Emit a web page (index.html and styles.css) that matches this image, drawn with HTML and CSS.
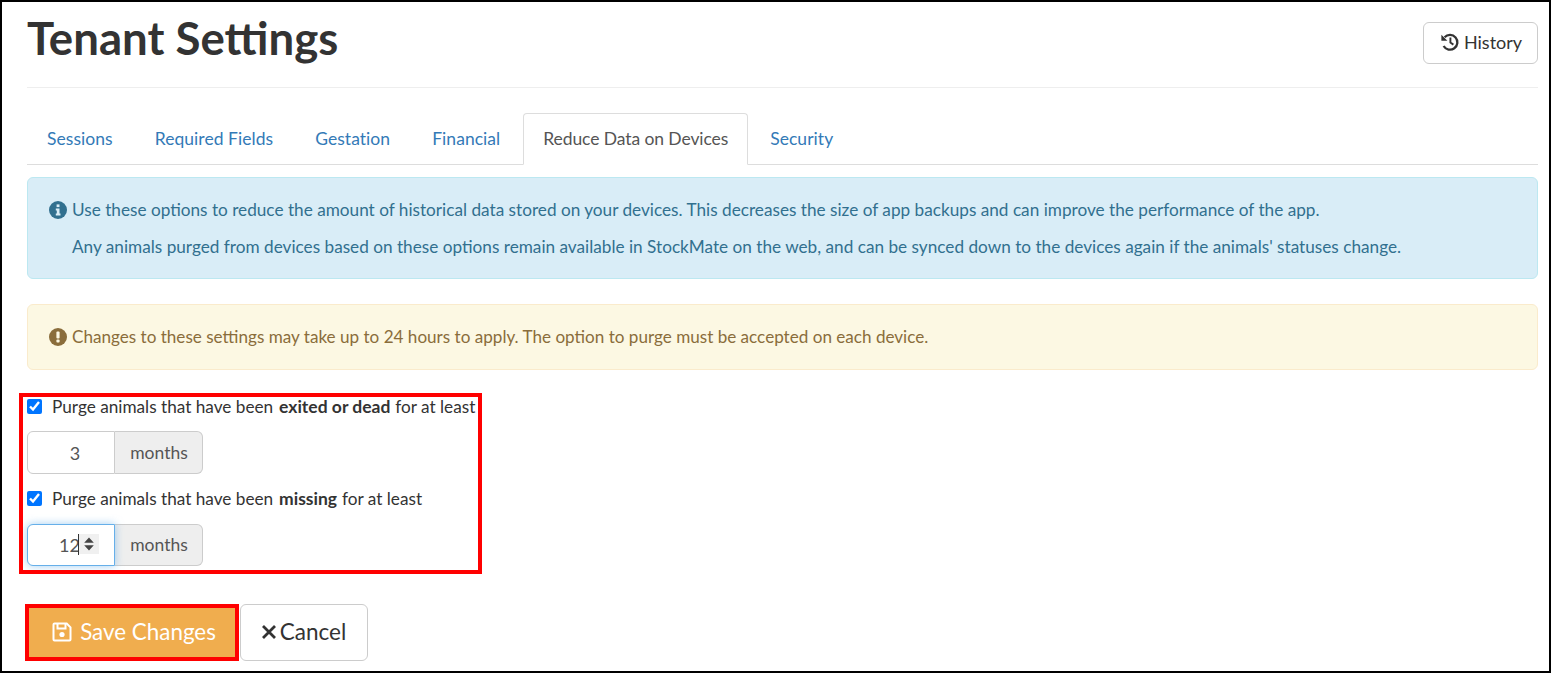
FILE: index.html
```html
<!DOCTYPE html>
<html lang="en">
<head>
<meta charset="utf-8">
<title>Tenant Settings</title>
<link rel="stylesheet" href="styles.css">
</head>
<body>
<div class="frame">
  <header class="page-header">
    <h1>Tenant Settings</h1>
    <button class="btn btn-history" type="button">
      <svg class="icon-history" viewBox="0 0 20 20" width="20" height="20" aria-hidden="true"><path d="M4.6 5.2A7.4 7.4 0 1 1 3.6 14" fill="none" stroke="#333" stroke-width="2.3"/><path d="M1.4 2.8v6h6z" fill="#333"/><path d="M10.4 5.6v5l3 2" fill="none" stroke="#333" stroke-width="1.9"/></svg>
      History
    </button>
  </header>
  <nav class="tabs">
    <a class="tab">Sessions</a>
    <a class="tab">Required Fields</a>
    <a class="tab">Gestation</a>
    <a class="tab">Financial</a>
    <a class="tab active">Reduce Data on Devices</a>
    <a class="tab">Security</a>
  </nav>
  <section class="alert alert-info">
    <p><svg class="alert-icon" viewBox="0 0 18 18" width="18" height="18" aria-hidden="true"><circle cx="9" cy="9" r="9" fill="#31708f"/><rect x="7.6" y="3.4" width="2.9" height="2.7" fill="#d9edf7"/><path d="M6.8 7.5h3.7v5h1v1.9H6.8v-1.9h1v-3.1h-1z" fill="#d9edf7"/></svg>Use these options to reduce the amount of historical data stored on your devices. This decreases the size of app backups and can improve the performance of the app.</p>
    <p class="indent">Any animals purged from devices based on these options remain available in StockMate on the web, and can be synced down to the devices again if the animals' statuses change.</p>
  </section>
  <section class="alert alert-warning">
    <p><svg class="alert-icon" viewBox="0 0 18 18" width="18" height="18" aria-hidden="true"><circle cx="9" cy="9" r="9" fill="#8a6d3b"/><rect x="7.4" y="3.4" width="3.2" height="7" rx="1" fill="#fcf8e3"/><rect x="7.4" y="11.6" width="3.2" height="3" rx="1" fill="#fcf8e3"/></svg>Changes to these settings may take up to 24 hours to apply. The option to purge must be accepted on each device.</p>
  </section>
  <form class="purge-form">
    <label class="check"><input type="checkbox" checked><span>Purge animals that have been <b>exited or dead</b> for at least</span></label>
    <div class="input-group">
      <input class="num" type="text" value="3">
      <span class="addon">months</span>
    </div>
    <label class="check second"><input type="checkbox" checked><span>Purge animals that have been <b>missing</b> for at least</span></label>
    <div class="input-group group-focused">
      <span class="num-wrap">
        <input class="num focused" type="text" value="12">
        <span class="caret"></span>
        <span class="spinner"><svg viewBox="0 0 12 16" width="12" height="16" aria-hidden="true"><path d="M6 1.5l4.8 5.2H1.2zM6 14.5L1.2 9.3h9.6z" fill="#444"/></svg></span>
      </span>
      <span class="addon">months</span>
    </div>
    <div class="highlight highlight-form"></div>
  </form>
  <div class="actions">
    <button class="btn btn-save" type="button">
      <svg viewBox="0 0 22 22" width="22" height="22" aria-hidden="true"><path d="M3.5 2.5h12.2l3.8 3.8v12.2a1 1 0 0 1-1 1h-15a1 1 0 0 1-1-1v-15a1 1 0 0 1 1-1z" fill="none" stroke="#fff" stroke-width="2"/><path d="M6.5 3v4.5h8V3" fill="none" stroke="#fff" stroke-width="2"/><circle cx="11" cy="13.5" r="2.6" fill="#fff"/></svg>
      Save Changes
    </button>
    <button class="btn btn-cancel" type="button">
      <svg viewBox="0 0 16 16" width="16" height="16" aria-hidden="true"><path d="M2 2l12 12M14 2L2 14" stroke="#333" stroke-width="2.8" fill="none"/></svg>Cancel
    </button>
  </div>
</div>
</body>
</html>
```
FILE: styles.css
```css
* { box-sizing: border-box; }
html, body { margin: 0; padding: 0; background: #fff; overflow: hidden; }
body { font-family: Lato, "Open Sans", sans-serif; color: #333; font-size: 17.2px; line-height: 1.43; }
.frame { width: 1551px; height: 673px; border: 2px solid #000; padding: 0 11px 0 25px; overflow: hidden; position: relative; }
.page-header { display: flex; justify-content: space-between; align-items: flex-start; height: 86px; border-bottom: 1px solid #eee; }
h1 { margin: 13px 0 0; font-size: 45.6px; line-height: 46px; font-weight: 700; color: #333; }
.btn { font-family: inherit; background: #fff; border: 1px solid #ccc; border-radius: 6px; color: #333; display: inline-flex; align-items: center; padding: 0; cursor: pointer; }
.btn-history { margin-top: 20px; width: 115px; height: 42px; font-size: 18px; justify-content: center; gap: 4px; padding: 0 0 2px 1px; }
.tabs { display: flex; gap: 2px; margin-top: 25px; height: 52px; border-bottom: 1px solid #ddd; }
.tab { padding: 0 19px; font-size: 17.5px; letter-spacing: .05px; line-height: 50px; color: #337ab7; border: 1px solid transparent; border-bottom: 0; border-radius: 4px 4px 0 0; height: 52px; }
.tab.active { margin-left: 1px; color: #555; background: #fff; border-color: #ddd; border-bottom: 1px solid #fff; letter-spacing: -.09px; }
.alert { border: 1px solid; border-radius: 6px; padding: 20px 21px 0; line-height: 24px; }
.alert p { margin: 0; display: flex; align-items: center; white-space: nowrap; height: 24px; }
.alert-icon { margin-right: 5px; flex: none; }
.alert-info { margin-top: 12px; height: 102px; background: #d9edf7; border-color: #bce8f1; color: #31708f; }
.alert-info p:first-child .alert-icon { margin-top: -1px; }
.alert-info .indent { margin-top: 13px; padding-left: 23px; }
.alert-warning { margin-top: 25px; height: 66px; font-size: 17.1px; background: #fcf8e3; border-color: #faebcc; color: #8a6d3b; }
.purge-form { position: relative; margin-top: 25px; }
.check { display: flex; align-items: center; height: 24px; white-space: nowrap; }
.check input { width: 15px; height: 15px; margin: 0 10px 2px 0; accent-color: #0075ff; flex: none; }
.check b { margin: 0 .5px 0 1.5px; font-size: 17.5px; font-weight: 700; }
.check.second { margin-top: 13px; }
.input-group { display: flex; margin-top: 12px; height: 43px; width: 176px; }
.input-group.group-focused { margin-top: 13px; height: 42px; }
.num-wrap { position: relative; display: block; width: 88px; height: 42px; flex: none; }
.num { width: 88px; height: 100%; font: inherit; font-size: 18px; color: #555; text-align: center; border: 1px solid #ccc; border-radius: 6px 0 0 6px; background: #fff; padding: 0 0 0 8px; outline: 0; flex: none; }
.num.focused { border-color: #66afe9; box-shadow: 0 0 8px rgba(102,175,233,.6); padding: 0 3px 0 0; }
.caret { position: absolute; left: 51px; top: 10px; width: 1px; height: 21px; background: #333; }
.spinner { position: absolute; left: 52px; top: 10px; width: 20px; height: 20px; background: #f0f0f0; display: flex; align-items: center; justify-content: center; }
.addon { width: 88px; height: 100%; display: flex; align-items: center; justify-content: center; font-size: 17.5px; color: #555; background: #eee; border: 1px solid #ccc; border-left: 0; border-radius: 0 6px 6px 0; flex: none; padding-left: 1px; }
.highlight { position: absolute; border: 4px solid #f00; pointer-events: none; }
.highlight-form { left: -8px; top: -2px; width: 463px; height: 181px; }
.actions { display: flex; align-items: center; margin-top: 38px; gap: 1px; }
.btn-save { width: 214px; height: 57px; margin-left: -2px; background: #f0ad4e; border: 4px solid #f00; border-radius: 0; color: #fff; font-size: 22.4px; justify-content: center; gap: 7px; padding: 0 0 2px 3px; }
.btn-cancel { width: 128px; height: 57px; font-size: 22.5px; justify-content: center; gap: 3px; padding: 0 1px 2px 0; }
```
